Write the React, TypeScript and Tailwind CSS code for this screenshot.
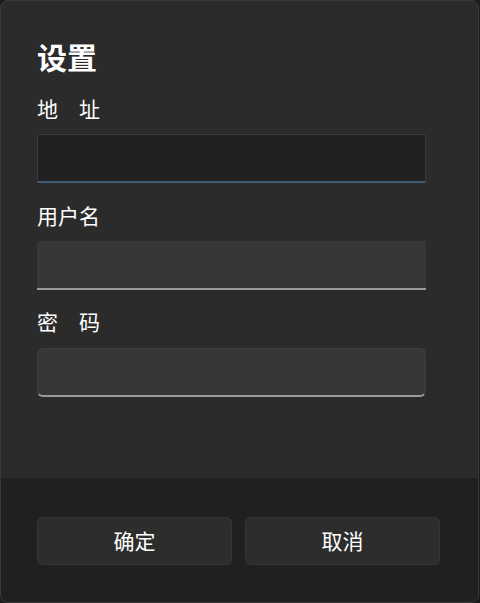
import { useState } from 'react'

const font = { fontFamily: '"Noto Sans CJK SC", "Noto Sans", sans-serif' }

export default function App() {
  const [address, setAddress] = useState('')
  const [user, setUser] = useState('')
  const [pass, setPass] = useState('')

  return (
    <div className="w-[480px] h-[603px] bg-[#1c1c1c] text-white" style={font}>
      <div className="w-[479px] h-[603px] flex flex-col rounded-[8px] border border-[#3a3a3a] bg-[#2b2b2b] overflow-hidden">
        <div className="flex-1 flex flex-col pl-[36px] pt-[35px]">
          <h2 className="text-[30px] font-bold leading-[40px] h-[40px]">设置</h2>

          <label className="mt-[18px] text-[21px] leading-[28px] h-[28px]">地　址</label>
          <input
            value={address}
            onChange={e => setAddress(e.target.value)}
            className="mt-[12px] w-[389px] h-[49px] bg-[#212121] border border-[#3a3a3a] border-b-2 border-b-[#3c5b78] px-3 text-[18px] outline-none"
          />

          <label className="mt-[18px] text-[21px] leading-[28px] h-[28px]">用户名</label>
          <input
            value={user}
            onChange={e => setUser(e.target.value)}
            className="mt-[12px] w-[389px] h-[49px] bg-[#373737] border-b-2 border-b-[#9a9a9a] px-3 text-[18px] outline-none"
          />

          <label className="mt-[17px] text-[21px] leading-[28px] h-[28px]">密　码</label>
          <input
            type="password"
            value={pass}
            onChange={e => setPass(e.target.value)}
            className="mt-[13px] w-[389px] h-[49px] bg-[#373737] rounded-[6px] border border-[#3e3e3e] border-b-2 border-b-[#9a9a9a] px-3 text-[18px] outline-none"
          />
        </div>

        <div className="h-[124px] shrink-0 bg-[#202020] flex items-center gap-[13px] pl-[36px] pt-[2px]">
          <button className="w-[195px] h-[48px] rounded-[6px] border border-[#353535] bg-[#2d2d2d] text-[21px]">确定</button>
          <button className="w-[195px] h-[48px] rounded-[6px] border border-[#353535] bg-[#2d2d2d] text-[21px]">取消</button>
        </div>
      </div>
    </div>
  )
}
